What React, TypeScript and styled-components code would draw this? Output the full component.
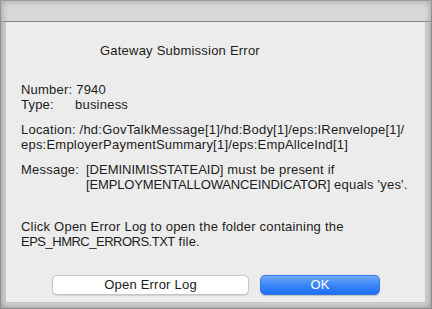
import React from "react";
import styled, { createGlobalStyle } from "styled-components";

const GlobalStyle = createGlobalStyle`
  html, body {
    margin: 0;
    padding: 0;
    background: #ececec;
  }
  * {
    box-sizing: border-box;
  }
`;

const textColor = "#1c1c1c";

const Window = styled.div`
  width: 432px;
  height: 309px;
  display: flex;
  flex-direction: column;
  background: #d6d6d6;
  box-shadow: inset 0 0 0 1px #8c8c8c, inset 0 0 6px 2px rgba(0, 0, 0, 0.28);
  font-family: "Liberation Sans", Arial, sans-serif;
  font-size: 13px;
  letter-spacing: 0.22px;
  color: ${textColor};
`;

const TitleBar = styled.div`
  height: 22px;
  flex: none;
  border-bottom: 1px solid #8f8f8f;
  background: linear-gradient(to bottom, rgba(255, 255, 255, 0.15), rgba(255, 255, 255, 0.02));
`;

const Body = styled.div`
  flex: 1;
  margin: 0 7px 7px 6px;
  background: #ececec;
  box-shadow: 0 0 0 1px rgba(0, 0, 0, 0.06);
  padding: 21px 14px 0 15px;
  display: flex;
  flex-direction: column;
  line-height: 15px;
`;

const Heading = styled.div`
  margin-left: 79px;
  margin-bottom: 24px;
`;

const Line = styled.div`
  white-space: nowrap;
`;

const Caps = styled.span<{ $spacing: number }>`
  letter-spacing: ${(p) => p.$spacing}px;
`;

const Section = styled.div<{ $gap: number }>`
  margin-top: ${(p) => p.$gap}px;
`;

const Field = styled.div<{ $labelWidth: number }>`
  display: grid;
  grid-template-columns: ${(p) => p.$labelWidth}px auto;
  white-space: nowrap;
`;

const Buttons = styled.div`
  margin-top: 26px;
  display: flex;
  gap: 11px;
  padding-left: 31px;
`;

const Button = styled.button<{ $primary?: boolean; $width: number }>`
  width: ${(p) => p.$width}px;
  height: 20px;
  border-radius: 5px;
  font-family: "Liberation Sans", Arial, sans-serif;
  font-size: 13px;
  letter-spacing: 0.22px;
  padding: 0;
  line-height: 18px;
  cursor: pointer;
  color: ${(p) => (p.$primary ? "#ffffff" : textColor)};
  border: 1px solid ${(p) => (p.$primary ? "#2f78f0" : "#c6c6c6")};
  background: ${(p) =>
    p.$primary
      ? "linear-gradient(to bottom, #6ea9fb 0%, #3d86f8 50%, #1c6ef5 100%)"
      : "#ffffff"};
  box-shadow: ${(p) =>
    p.$primary ? "0 0.5px 1px rgba(0,0,0,0.2)" : "0 0.5px 1px rgba(0,0,0,0.12)"};
`;

export default function App() {
  return (
    <>
      <GlobalStyle />
      <Window>
        <TitleBar />
        <Body>
          <Heading>Gateway Submission Error</Heading>

          <Line>Number: 7940</Line>
          <Field $labelWidth={54}>
            <span>Type:</span>
            <span>business</span>
          </Field>

          <Section $gap={10}>
            <Line>Location: /hd:GovTalkMessage[1]/hd:Body[1]/eps:IRenvelope[1]/</Line>
            <Line>eps:EmployerPaymentSummary[1]/eps:EmpAllceInd[1]</Line>
          </Section>

          <Section $gap={10}>
            <Field $labelWidth={65}>
              <span>Message:</span>
              <span>
                <Caps $spacing={0}>[DEMINIMISSTATEAID]</Caps> must be present if
                <br />
                <Caps $spacing={-0.15}>[EMPLOYMENTALLOWANCEINDICATOR]</Caps> equals 'yes'.
              </span>
            </Field>
          </Section>

          <Section $gap={27}>
            <Line>Click Open Error Log to open the folder containing the</Line>
            <Line>
              <Caps $spacing={-0.5}>EPS_HMRC_ERRORS.TXT</Caps> file.
            </Line>
          </Section>

          <Buttons>
            <Button $width={197}>Open Error Log</Button>
            <Button $primary $width={120}>OK</Button>
          </Buttons>
        </Body>
      </Window>
    </>
  );
}
